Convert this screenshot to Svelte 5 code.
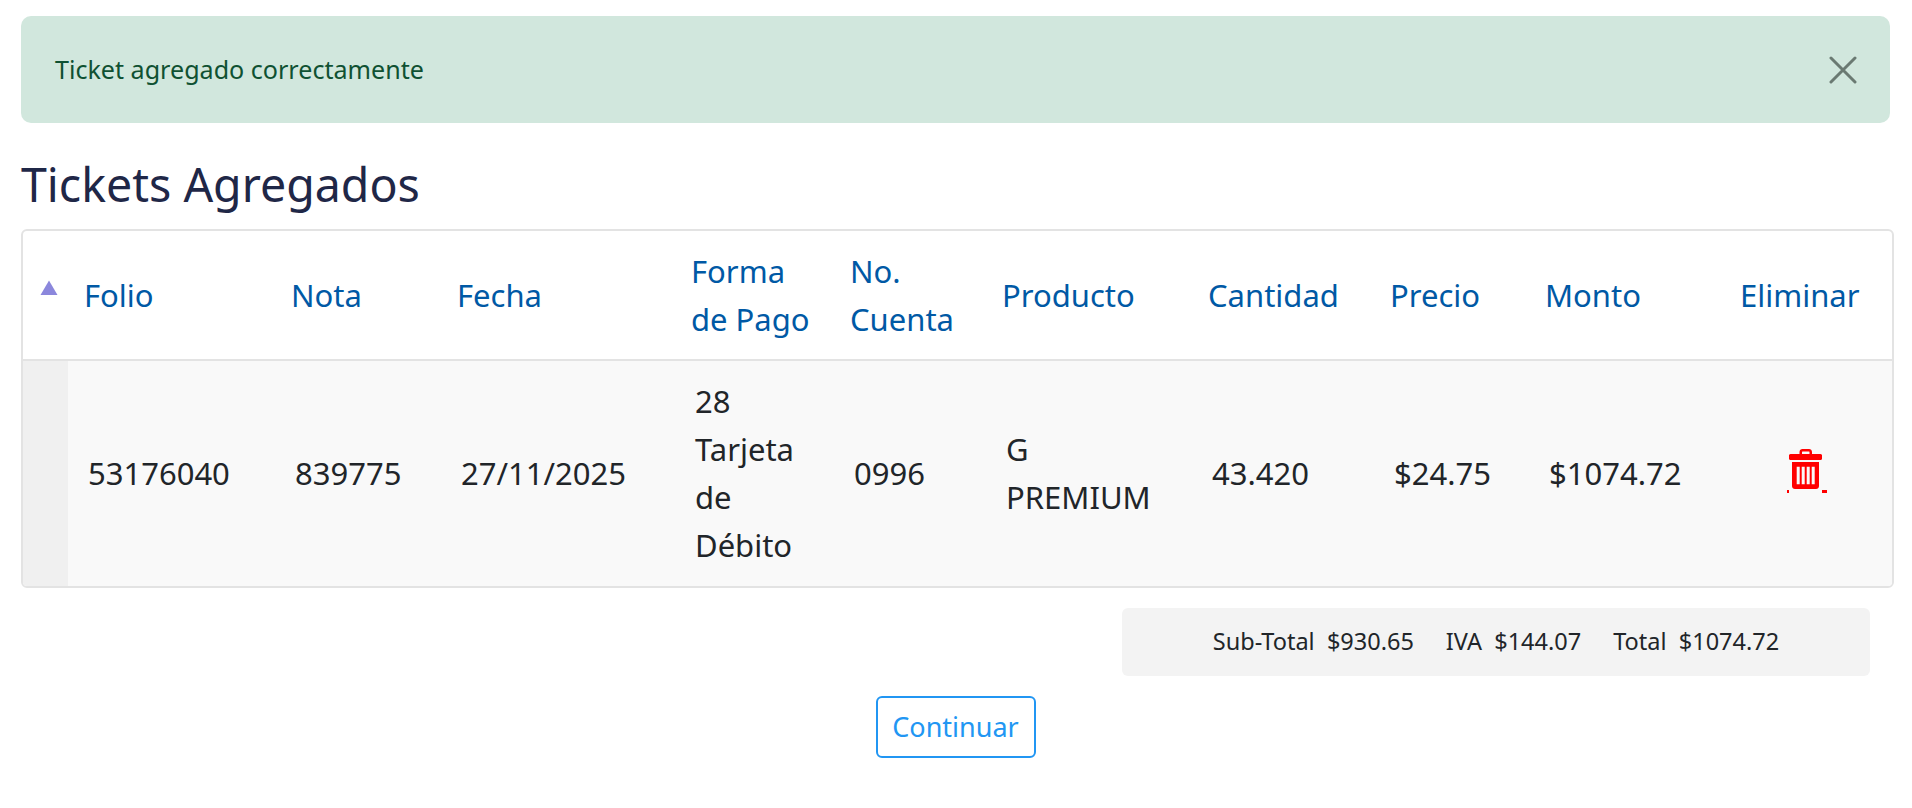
<script lang="ts">
  let alertOpen = $state(true);

  const columns = [
    { key: 'sort', width: 45 },
    { key: 'folio', label: ['Folio'], width: 207 },
    { key: 'nota', label: ['Nota'], width: 166 },
    { key: 'fecha', label: ['Fecha'], width: 234 },
    { key: 'pago', label: ['Forma', 'de Pago'], width: 159 },
    { key: 'cuenta', label: ['No.', 'Cuenta'], width: 152 },
    { key: 'producto', label: ['Producto'], width: 206 },
    { key: 'cantidad', label: ['Cantidad'], width: 182 },
    { key: 'precio', label: ['Precio'], width: 155 },
    { key: 'monto', label: ['Monto'], width: 195 },
    { key: 'eliminar', label: ['Eliminar'], width: 170 }
  ];

  const ticket = [
    ['53176040'],
    ['839775'],
    ['27/11/2025'],
    ['28', 'Tarjeta', 'de', 'Débito'],
    ['0996'],
    ['G', 'PREMIUM'],
    ['43.420'],
    ['$24.75'],
    ['$1074.72']
  ];
</script>

<main class="page">
  {#if alertOpen}
    <div class="alert" role="alert">
      <span>Ticket agregado correctamente</span>
      <button class="close-btn" onclick={() => (alertOpen = false)} aria-label="Close">
        <svg width="28" height="28" viewBox="0 0 28 28" fill="none">
          <path d="M2 2L26 26M26 2L2 26" stroke="currentColor" stroke-width="3" stroke-linecap="round"/>
        </svg>
      </button>
    </div>
  {/if}

  <h1>Tickets Agregados</h1>

  <div class="table-wrap">
    <table>
      <colgroup>
        {#each columns as col}
          <col style="width: {col.width}px" />
        {/each}
      </colgroup>
      <thead>
        <tr>
          {#each columns as col}
            {#if col.key === 'sort'}
              <th class="sort">
                <svg width="18" height="15" viewBox="0 0 18 15"><path d="M9 0.5L17.500 15H0.500Z" fill="#8b87dc"/></svg>
              </th>
            {:else}
              <th>
                {#each col.label ?? [] as line, i}
                  {#if i > 0}<br />{/if}{line}
                {/each}
              </th>
            {/if}
          {/each}
        </tr>
      </thead>
      <tbody>
        <tr>
          <td class="sort-cell"></td>
          {#each ticket as cell}
            <td>
              {#each cell as line, i}
                {#if i > 0}<br />{/if}{line}
              {/each}
            </td>
          {/each}
          <td class="delete">
            <svg class="trash" width="40" height="44" viewBox="0 0 40 44" role="img" aria-label="Eliminar">
              <path fill="#f00" fill-rule="evenodd" d="M12.500 5V3C12.500 1.300 13.800 0 15.500 0H22C23.700 0 25 1.300 25 3V5H33.500C34.500 5 35 5.800 35 6.500V9.500C35 10.300 34.500 11 33.500 11H3.500C2.500 11 2 10.300 2 9.500V6.500C2 5.800 2.500 5 3.500 5ZM15 5H22.500V3C22.500 2.700 22.300 2.500 22 2.500H15.500C15.200 2.500 15 2.700 15 3Z"/>
              <path fill="#f00" fill-rule="evenodd" d="M5 13H32V37C32 38.700 30.700 40 29 40H8C6.300 40 5 38.700 5 37ZM9.700 17.700V35.300H12.700V17.700ZM14.700 17.700V35.300H17.700V17.700ZM19.700 17.700V35.300H22.700V17.700ZM24.700 17.700V35.300H27.700V17.700Z"/>
              <rect x="0" y="41" width="2" height="3" fill="#f00"/>
              <rect x="35" y="41" width="5" height="3" fill="#f00"/>
            </svg>
          </td>
        </tr>
      </tbody>
    </table>
  </div>

  <div class="totals">
    <span>Sub-Total&nbsp; $930.65</span>
    <span>IVA&nbsp; $144.07</span>
    <span>Total&nbsp; $1074.72</span>
  </div>

  <div class="actions">
    <button class="btn-outline">Continuar</button>
  </div>
</main>

<style>
  :global(body) {
    margin: 0;
    background: #fff;
    font-family: "Noto Sans", sans-serif;
    color: #212529;
  }
  .page {
    box-sizing: border-box;
    width: 1912px;
    padding: 16px 18px 0 21px;
  }
  .alert {
    box-sizing: border-box;
    display: flex;
    align-items: center;
    justify-content: space-between;
    height: 107px;
    margin-right: 4px;
    padding: 0 33px 2px 34px;
    background: #d1e7dd;
    color: #0f5132;
    border-radius: 10px;
    font-size: 25.1px;
  }
  .close-btn {
    display: flex;
    padding: 3px 0 0;
    background: none;
    border: none;
    color: #6a7a72;
    cursor: pointer;
  }
  h1 {
    margin: 31px 0 15px;
    font-size: 46.5px;
    font-weight: 400;
    line-height: 60px;
    color: #1f2747;
  }
  .table-wrap {
    border: 2px solid #e3e3e3;
    border-radius: 6px;
    overflow: hidden;
  }
  table {
    width: 1871px;
    table-layout: fixed;
    border-collapse: collapse;
    font-size: 31px;
    line-height: 48px;
  }
  th {
    padding: 16px;
    text-align: left;
    font-weight: 400;
    color: #0059a5;
    border-bottom: 2px solid #e3e3e3;
  }
  th.sort { padding: 49px 0 0 17px; vertical-align: top; line-height: 0; }
  td {
    padding: 15.500px 16px 17.500px 20px;
    background: #f9f9f9;
    color: #212529;
  }
  td.sort-cell { background: #f0f0f0; padding: 0; }
  td.delete { padding: 0; }
  .trash { display: block; margin: 0 0 5px 63px; }
  .totals {
    box-sizing: border-box;
    display: flex;
    justify-content: center;
    gap: 32px;
    width: 748px;
    height: 68px;
    margin: 20px 0 0 1101px;
    padding-bottom: 2px;
    align-items: center;
    background: #f3f3f3;
    border-radius: 6px;
    font-size: 23.500px;
  }
  .actions {
    display: flex;
    justify-content: center;
    margin-top: 20px;
    padding-right: 4px;
  }
  .btn-outline {
    box-sizing: border-box;
    width: 160px;
    height: 62px;
    padding: 0 0 2px;
    background: #fff;
    border: 2px solid #2196f3;
    border-radius: 6px;
    color: #2196f3;
    font-family: inherit;
    font-size: 27px;
    cursor: pointer;
  }
</style>
